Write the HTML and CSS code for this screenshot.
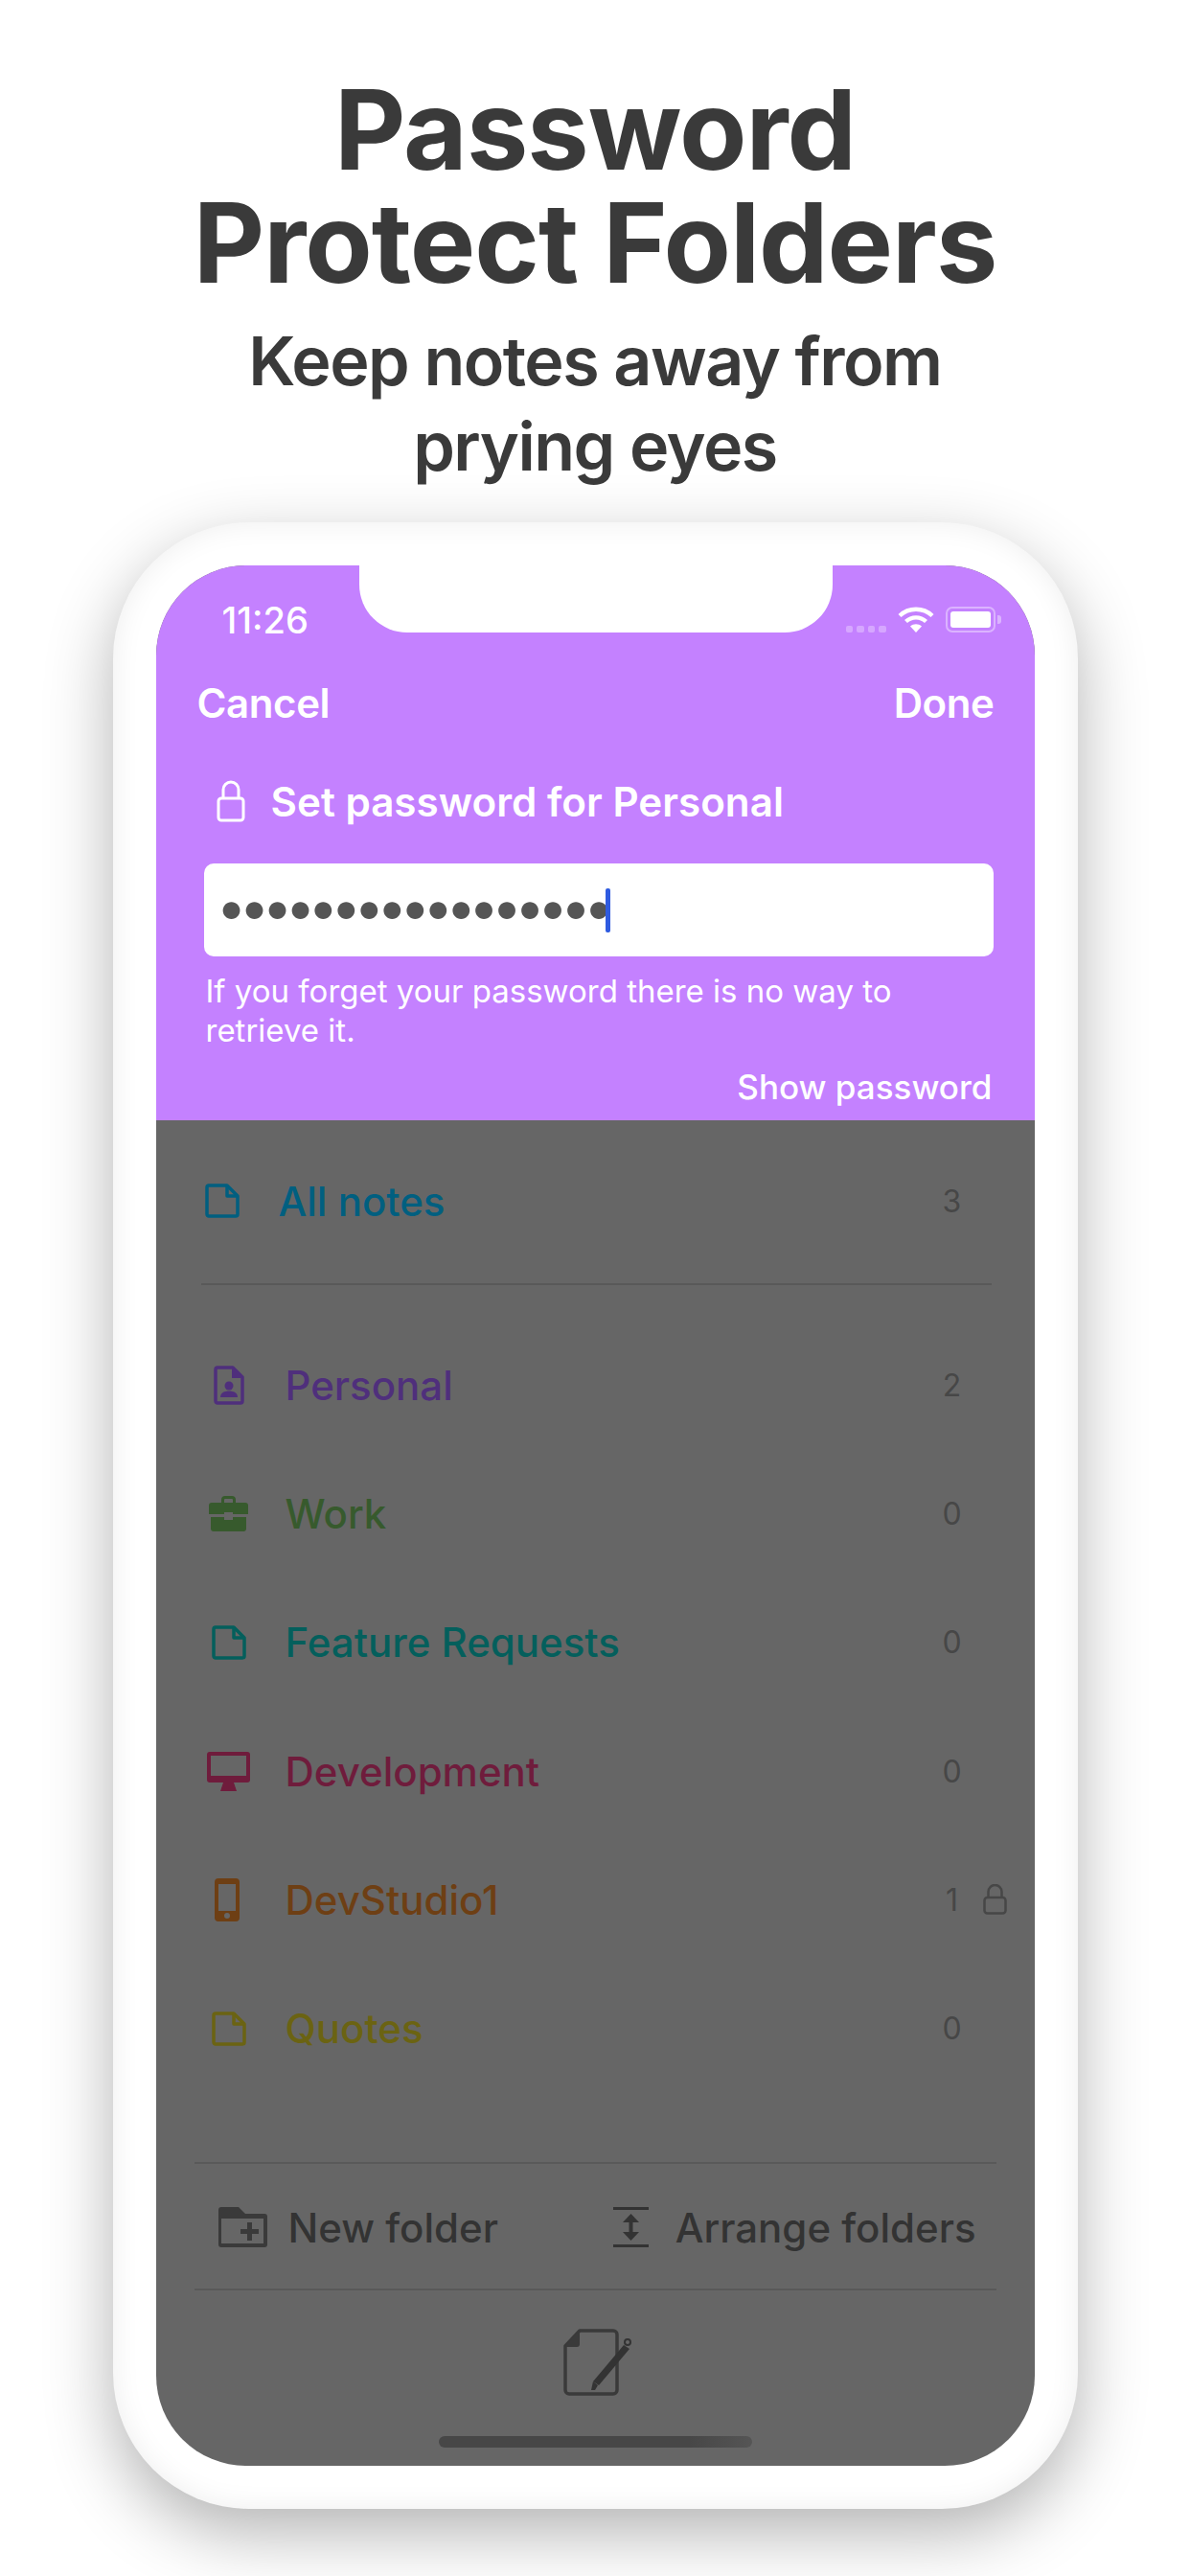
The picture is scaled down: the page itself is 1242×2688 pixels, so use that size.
FILE: index.html
```html
<!DOCTYPE html>
<html lang="en">
<head>
  <meta charset="UTF-8" />
  <meta name="viewport" content="width=device-width, initial-scale=1.0" />
  <title>Password Protect Folders</title>
  <link rel="stylesheet" href="styles.css">
</head>
<body>
  <header class="promo">
    <h1>Password<br>Protect Folders</h1>
    <p>Keep notes away from<br>prying eyes</p>
  </header>

  <div class="phone">
    <div class="screen">
      <div class="notch"></div>

      <section class="sheet">
        <div class="status">
          <span class="time">11:26</span>
          <div class="status-icons">
            <div class="signal"><i></i><i></i><i></i><i></i></div>
            <svg class="wifi" width="38" height="27" viewBox="0 0 38 27">
              <path d="M2 9.5C11.5 .5 26.5 .5 36 9.5" fill="none" stroke="#fff" stroke-width="4.4"/>
              <path d="M8.5 15.5C14.5 10 23.500 10 29.500 15.500" fill="none" stroke="#fff" stroke-width="4.4"/>
              <path d="M13 20.500C16.500 17.500 21.500 17.500 25 20.500L19 27Z" fill="#fff"/>
            </svg>
            <div class="battery"><div class="battery-fill"></div></div>
            <div class="battery-nub"></div>
          </div>
        </div>

        <div class="nav">
          <span>Cancel</span>
          <span>Done</span>
        </div>

        <div class="set-title">
          <svg width="30" height="44" viewBox="0 0 30 44" fill="none" stroke="#fff" stroke-width="3">
            <rect x="2" y="19" width="26" height="23" rx="3"/>
            <path d="M7 19V10a8 8 0 0 1 16 0v9"/>
          </svg>
          <span>Set password for Personal</span>
        </div>

        <div class="field">
          <span class="dots">•••••••••••••••••</span>
          <span class="caret"></span>
        </div>

        <p class="hint">If you forget your password there is no way to<br>retrieve it.</p>
        <div class="show">Show password</div>
      </section>

      <section class="folders">
        <div class="row row-all c-blue">
          <div class="icon">
            <svg width="36" height="36" viewBox="0 0 36 36" fill="none" stroke="currentColor" stroke-width="3.500" stroke-linejoin="round">
              <path d="M4 2H23L34 13V32a2 2 0 0 1-2 2H4a2 2 0 0 1-2-2V4a2 2 0 0 1 2-2Z"/>
              <path d="M23 2V13H34"/>
            </svg>
          </div>
          <span class="name">All notes</span>
          <span class="count">3</span>
          <span class="lock-slot"></span>
        </div>

        <div class="divider"></div>

        <div class="group">
          <div class="row c-purple">
            <div class="icon">
              <svg width="32" height="41" viewBox="0 0 32 41" fill="none">
                <path d="M4 2H20L30 12V37a2 2 0 0 1-2 2H4a2 2 0 0 1-2-2V4a2 2 0 0 1 2-2Z" stroke="currentColor" stroke-width="3.500" stroke-linejoin="round"/>
                <path d="M19 1L31 13H19Z" fill="currentColor"/>
                <circle cx="16" cy="21" r="4.500" fill="currentColor"/>
                <path d="M7 33c0-4.500 4-6.500 9-6.500s9 2 9 6.500Z" fill="currentColor"/>
              </svg>
            </div>
            <span class="name">Personal</span>
            <span class="count">2</span>
            <span class="lock-slot"></span>
          </div>

          <div class="row c-green">
            <div class="icon">
              <svg width="41" height="38" viewBox="0 0 41 38" fill="currentColor">
                <path d="M13 9V5a4 4 0 0 1 4-4h7a4 4 0 0 1 4 4v4h-3V5a1 1 0 0 0-1-1h-7a1 1 0 0 0-1 1v4Z"/>
                <path d="M3 8H38a3 3 0 0 1 3 3V20H25V18H16V20H0V11a3 3 0 0 1 3-3Z"/>
                <path d="M2 23H16V26H25V23H39V35a3 3 0 0 1-3 3H5a3 3 0 0 1-3-3Z"/>
              </svg>
            </div>
            <span class="name">Work</span>
            <span class="count">0</span>
            <span class="lock-slot"></span>
          </div>

          <div class="row c-teal">
            <div class="icon">
              <svg width="36" height="36" viewBox="0 0 36 36" fill="none" stroke="currentColor" stroke-width="3.500" stroke-linejoin="round">
                <path d="M4 2H23L34 13V32a2 2 0 0 1-2 2H4a2 2 0 0 1-2-2V4a2 2 0 0 1 2-2Z"/>
                <path d="M23 2V13H34"/>
              </svg>
            </div>
            <span class="name">Feature Requests</span>
            <span class="count">0</span>
            <span class="lock-slot"></span>
          </div>

          <div class="row c-red">
            <div class="icon">
              <svg width="45" height="41" viewBox="0 0 45 41" fill="currentColor">
                <path fill-rule="evenodd" d="M3 0H42a3 3 0 0 1 3 3V29a3 3 0 0 1-3 3H3a3 3 0 0 1-3-3V3a3 3 0 0 1 3-3ZM4 4V25H41V4Z"/>
                <path d="M17 32H28L31 41H14Z"/>
              </svg>
            </div>
            <span class="name">Development</span>
            <span class="count">0</span>
            <span class="lock-slot"></span>
          </div>

          <div class="row c-orange">
            <div class="icon icon-phone">
              <svg width="26" height="45" viewBox="0 0 26 45" fill="currentColor">
                <path fill-rule="evenodd" d="M4 0H22a4 4 0 0 1 4 4V41a4 4 0 0 1-4 4H4a4 4 0 0 1-4-4V4a4 4 0 0 1 4-4ZM4 6V34H22V6ZM13 36a3 3 0 1 0 0 6 3 3 0 0 0 0-6Z"/>
              </svg>
            </div>
            <span class="name">DevStudio1</span>
            <span class="count">1</span>
            <span class="lock-slot">
              <svg width="25" height="32" viewBox="0 0 25 32" fill="none" stroke="#474747" stroke-width="2.500">
                <rect x="1.500" y="14" width="22" height="16.500" rx="3"/>
                <path d="M5.500 14V8a7 7 0 0 1 14 0v6"/>
              </svg>
            </span>
          </div>

          <div class="row c-olive">
            <div class="icon">
              <svg width="36" height="36" viewBox="0 0 36 36" fill="none" stroke="currentColor" stroke-width="3.500" stroke-linejoin="round">
                <path d="M4 2H23L34 13V32a2 2 0 0 1-2 2H4a2 2 0 0 1-2-2V4a2 2 0 0 1 2-2Z"/>
                <path d="M23 2V13H34"/>
              </svg>
            </div>
            <span class="name">Quotes</span>
            <span class="count">0</span>
            <span class="lock-slot"></span>
          </div>
        </div>
      </section>

      <div class="actions">
        <div class="action">
          <svg width="51" height="42" viewBox="0 0 51 42" fill="#3a3a3a">
            <path fill-rule="evenodd" d="M3 0H21L28 7H48a3 3 0 0 1 3 3V39a3 3 0 0 1-3 3H3a3 3 0 0 1-3-3V3a3 3 0 0 1 3-3ZM3 12V38H47V12Z"/>
            <path d="M30 16H35V23H42V28H35V35H30V28H23V23H30Z"/>
          </svg>
          <span>New folder</span>
        </div>
        <div class="action">
          <svg width="37" height="42" viewBox="0 0 37 42" fill="#333">
            <rect x="0" y="0" width="37" height="3"/>
            <rect x="0" y="39" width="37" height="3"/>
            <path d="M18.500 7L27 16H20.500V26H27L18.500 35L10 26H16.500V16H10Z"/>
          </svg>
          <span>Arrange folders</span>
        </div>
      </div>

      <div class="compose">
        <svg width="72" height="70" viewBox="0 0 72 70" fill="none">
          <path d="M17 2H52a4 4 0 0 1 4 4V64a4 4 0 0 1-4 4H6a4 4 0 0 1-4-4V18Z" stroke="#3a3a3a" stroke-width="3.500" stroke-linejoin="round"/>
          <path d="M17 1L1 19H14a3 3 0 0 0 3-3Z" fill="#3a3a3a"/>
          <path d="M63 17L69 21L37 59L31 55Z" fill="#333"/>
          <path d="M31 55L36 59L33 64H29Z" fill="#333"/>
          <circle cx="67" cy="14" r="3" stroke="#333" stroke-width="2"/>
        </svg>
      </div>

      <div class="home-bar"></div>
    </div>
  </div>
</body>
</html>
```

FILE: styles.css
```css
body {
  font-family: 'Inter', 'Liberation Sans', sans-serif;
  background: white;
  width: 1242px;
  height: 2688px;
  margin: 0;
  overflow: hidden;
  color: #3a3a3a;
}

.promo {
  padding-top: 77px;
  text-align: center;
}

.promo h1 {
  margin: 0;
  font-size: 115px;
  line-height: 118px;
  font-weight: 700;
  letter-spacing: -1px;
}

.promo p {
  margin: 19px 0 0;
  font-size: 70px;
  line-height: 89px;
  font-weight: 600;
  letter-spacing: -1.500px;
}

.phone {
  box-sizing: border-box;
  width: 1007px;
  height: 2073px;
  margin: 35px auto 0;
  padding: 45px;
  background: white;
  border-radius: 142px;
  box-shadow: 0 25px 70px rgba(0, 0, 0, 0.3), inset 0 0 30px rgba(0, 0, 0, 0.07);
}

.screen {
  position: relative;
  display: flex;
  flex-direction: column;
  height: 100%;
  background: #666;
  border-radius: 94px;
  overflow: hidden;
}

.notch {
  position: absolute;
  top: 0;
  left: 212px;
  width: 494px;
  height: 70px;
  background: white;
  border-radius: 0 0 50px 50px;
}

/* purple password sheet */
.sheet {
  height: 579px;
  flex: none;
  background: #c481ff;
  color: white;
}

.status {
  display: flex;
  justify-content: space-between;
  height: 76px;
  padding: 38px 35px 0 69px;
}

.time {
  font-size: 38px;
  line-height: 38px;
  font-weight: 500;
}

.status-icons {
  display: flex;
  align-items: flex-start;
  height: 27px;
  margin-top: 5px;
}

.signal {
  display: flex;
  gap: 4px;
  margin: 20px 12px 0 0;
}

.signal i {
  width: 7.500px;
  height: 7px;
  border-radius: 2px;
  background: rgba(255, 255, 255, 0.3);
}

.wifi {
  margin-right: 12px;
}

.battery {
  box-sizing: border-box;
  width: 52px;
  height: 27px;
  padding: 3px;
  border: 2px solid rgba(255, 255, 255, 0.4);
  border-radius: 7px;
}

.battery-fill {
  height: 100%;
  background: white;
  border-radius: 3px;
}

.battery-nub {
  width: 4px;
  height: 9px;
  margin: 9px 0 0 2px;
  background: rgba(255, 255, 255, 0.4);
  border-radius: 0 3px 3px 0;
}

.nav {
  display: flex;
  justify-content: space-between;
  height: 60px;
  padding: 0 42px 0 43px;
  font-size: 42px;
  line-height: 60px;
  font-weight: 600;
  letter-spacing: -0.400px;
}

.set-title {
  display: flex;
  align-items: center;
  gap: 27px;
  height: 60px;
  margin-top: 42px;
  padding-left: 63px;
  font-size: 42.200px;
  font-weight: 600;
}

.field {
  display: flex;
  align-items: center;
  height: 97px;
  margin: 35px 43px 0 50px;
  padding-left: 13px;
  background: white;
  border-radius: 10px;
}

.dots {
  margin-bottom: 6px;
  font-size: 57px;
  line-height: 89px;
  letter-spacing: -8.100px;
  color: #555;
}

.caret {
  width: 5px;
  height: 46px;
  margin-left: -1px;
  background: #2f5be0;
  border-radius: 2px;
}

.hint {
  margin: 16px 0 0 52px;
  font-size: 33px;
  line-height: 41px;
}

.show {
  margin: 15px 44px 0 0;
  font-size: 35px;
  line-height: 46px;
  font-weight: 500;
  text-align: right;
}

/* folder list */
.folders {
  flex: none;
  height: 1087px;
  padding-top: 17px;
  box-sizing: border-box;
}

.row {
  display: flex;
  align-items: center;
  height: 134px;
  padding: 0 29px 0 46px;
}

.row-all {
  padding-left: 39px;
}

.group .row {
  height: 134.300px;
}

.icon {
  display: flex;
  align-items: center;
  justify-content: center;
  width: 60px;
  margin-right: 29px;
}

.icon-phone {
  padding-right: 4px;
  box-sizing: border-box;
}

.name {
  flex: 1;
  font-size: 42px;
  font-weight: 500;
}

.count {
  width: 30px;
  font-size: 32px;
  text-align: center;
  color: #474747;
}

.lock-slot {
  display: flex;
  width: 25px;
  margin-left: 17px;
}

.divider {
  height: 2px;
  margin: 19px 45px 37px 47px;
  background: #595959;
}

.c-blue { color: #005f80; }
.c-purple { color: #4f2f7c; }
.c-green { color: #375a2d; }
.c-teal { color: #045f5c; }
.c-red { color: #6f1c3c; }
.c-orange { color: #6e3f14; }
.c-olive { color: #6b6312; }

.actions {
  display: flex;
  justify-content: space-between;
  align-items: center;
  height: 134px;
  margin: 0 40px;
  padding: 2px 21px 0 25px;
  box-sizing: border-box;
  border-top: 2px solid #595959;
  border-bottom: 2px solid #595959;
  font-size: 42px;
  font-weight: 500;
  color: #333;
}

.action {
  display: flex;
  align-items: center;
  gap: 22px;
}

.action:last-child {
  gap: 28px;
}

.compose {
  display: flex;
  justify-content: center;
  margin: 40px 0 0 6px;
}

.home-bar {
  position: absolute;
  left: 295px;
  bottom: 19px;
  width: 327px;
  height: 12px;
  border-radius: 6px;
  background: linear-gradient(90deg, #474747, #474747 80%, #555);
}
```
